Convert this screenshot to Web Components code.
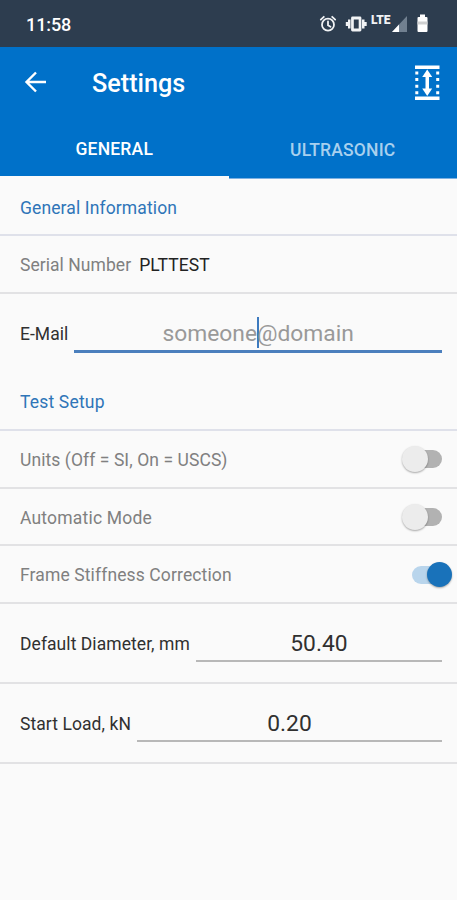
<!DOCTYPE html>
<html lang="en"><head><meta charset="utf-8"><title>Settings</title>
<style>html,body{margin:0;height:100%;background:#fafafa}body{font-family:Roboto,"Liberation Sans",sans-serif;overflow:hidden}</style></head>
<body>
<settings-app></settings-app>
<script>
const define=(name,html,setup)=>customElements.define(name,class extends HTMLElement{
  connectedCallback(){
    if(this.shadowRoot)return;
    const t=document.createElement('template');t.innerHTML=html;
    this.attachShadow({mode:'open'}).append(t.content.cloneNode(true));
    if(setup)setup(this,this.shadowRoot);
  }
});
define('status-bar',`<style>
:host{display:flex;box-sizing:border-box;height:47px;background:#2d3d4f;color:#fff;align-items:center;justify-content:space-between;padding:1px 0 0 26px;font-weight:500;font-size:18px}
span{letter-spacing:-.1px}svg{display:block;width:140px;height:32px}
</style><span>11:58</span>
<svg viewBox="317 8 140 32">
<g fill="none" stroke="#f1f3f5" stroke-width="1.8" stroke-linecap="round"><circle cx="328" cy="24.7" r="6"/><path d="M320.8 19.6l3-2.8M335.2 19.6l-3-2.8M328 21.5v3.7l2.5 1.5"/></g>
<g fill="#f1f3f5"><path fill-rule="evenodd" d="M352.5 16.5h7.5a1.4 1.4 0 0 1 1.4 1.4v12.2a1.4 1.4 0 0 1-1.4 1.4h-7.5a1.4 1.4 0 0 1-1.4-1.4V17.9a1.4 1.4 0 0 1 1.4-1.4zm1.3 3v9h4.9v-9z"/><path d="M348 19.5h2.5v9H348zM362 19.5h2.5v9H362zM345.8 22h2.4v4h-2.4zM364.3 22h2.4v4h-2.4z"/></g>
<text x="371" y="24" font-size="12.5" font-weight="900" fill="#f1f3f5" textLength="19.5" lengthAdjust="spacingAndGlyphs">LTE</text>
<path d="M407 16v16h-15z" fill="#718090"/><path d="M399 24.5V32h-7z" fill="#fff"/>
<path d="M420 14.5h5V17h1.5q1 0 1 1v13q0 1-1 1h-8q-1 0-1-1V18q0-1 1-1h1.5z" fill="#fff"/><path d="M417.5 21.5h10v3h-10z" fill="#cfd0d1"/></svg>`);
define('app-bar',`<style>
:host{display:flex;box-sizing:border-box;height:73px;background:#0071c9;color:#fff;align-items:center;padding:0 17px 0 24px}
h1{margin:1px 0 0 45px;font-size:25.2px;font-weight:500;line-height:30px;flex:1}svg{display:block}.back{margin-bottom:3px}.gauge{margin-bottom:1px}
</style>
<svg class="back" width="23" height="22" viewBox="0 0 23 22" fill="none" stroke="#fff" stroke-width="2.4"><path d="M22 11H3M12 1.5L2.5 11l9.5 9.5"/></svg>
<h1><slot></slot></h1>
<svg class="gauge" width="25" height="36" viewBox="0 0 25 36" fill="#fff"><path d="M0 .5h24.5V4H0zM0 31.5h24.5V35H0z"/><path d="M10.5 10h3.5v16h-3.5z"/><path d="M12.2 4.5L17.2 12h-10z"/><path d="M12.2 31L17.2 23.5h-10z"/><path d="M1.8 6.5v24M22.7 6.5v24" stroke="#fff" stroke-width="3" stroke-dasharray="3 3.6"/></svg>`);
define('tab-item',`<style>
:host{flex:1;box-sizing:border-box;display:flex;height:59px;align-items:center;justify-content:center;color:#a8d0ee;font-size:17.5px;font-weight:500;border-bottom:1px solid #7db1e2}
:host([active]){color:#fff;border-bottom:3px solid #fafafa}
span{padding-top:1px;letter-spacing:.2px}:host([active]) span{padding-top:2px}
</style><span><slot></slot></span>`);
define('tab-strip',`<style>:host{display:flex;background:#0071c9;height:59px}</style><slot></slot>`);
define('setting-row',`<style>
:host{display:flex;box-sizing:border-box;height:var(--h,58px);align-items:center;padding:0 15px 0 20px;border-bottom:2px solid #e2e2e4;color:#808080;font-size:17.5px}
:host([heading]){color:#2f75b8;border-color:#dfe1ea}:host([borderless]){border:0}:host([field]){color:#303030}
.label{white-space:pre;letter-spacing:var(--track,.12px);padding-top:2px}
:host([borderless]) .label{padding-top:1px}
</style><span class="label"></span><slot></slot>`,(h,r)=>r.querySelector('.label').textContent=h.getAttribute('label'));
define('row-value',`<style>:host{color:#222;margin-left:8px;padding-top:2px;letter-spacing:.1px}</style><slot></slot>`);
define('text-field',`<style>
:host{flex:1;margin-left:6px;align-self:flex-end;margin-bottom:20px;box-sizing:border-box;height:37px;border-bottom:2px solid #b8b8b8;display:flex;justify-content:center;align-items:center;font-size:22.8px;color:#303030;padding-top:2px}
:host([focused]){border-bottom:3px solid #4b7fbd;color:#999;height:38px}
i{display:none;width:2px;height:31px;background:#3d7abf;margin:-2px -2px 0 0}:host([focused]) i{display:block}
</style><slot></slot><i></i><slot name="after"></slot>`);
define('toggle-switch',`<style>
:host{display:flex;align-items:center;margin-left:auto;width:40px;height:28px}
.track{width:29px;height:18px;border-radius:9px;background:#b2b2b2;margin-left:11px;display:flex;align-items:center}
.thumb{flex:none;width:26px;height:26px;border-radius:50%;background:#ececec;margin-left:-11px;box-shadow:0 1px 2px #0005}
:host([on]) .track{background:#b9d5ec;width:30px}:host([on]) .thumb{background:#1972ba;margin-left:15px;width:25px;height:25px}
:host([on]){position:relative;left:-1px;padding-top:1px}
</style><div class="track"><div class="thumb"></div></div>`);
define('settings-app',`<style>:host{display:flex;flex-direction:column;width:457px;height:900px;background:#fafafa}setting-row{flex:none}</style>
<status-bar></status-bar><app-bar>Settings</app-bar>
<tab-strip><tab-item active>GENERAL</tab-item><tab-item>ULTRASONIC</tab-item></tab-strip>
<setting-row heading label="General Information" style="--h:57px"></setting-row>
<setting-row label="Serial Number" style="--track:.05px"><row-value>PLTTEST</row-value></setting-row>
<setting-row field borderless label="E-Mail" style="--h:79px;--track:0.04px"><text-field focused>someone<span slot="after">@domain</span></text-field></setting-row>
<setting-row heading label="Test Setup" style="--track:.18px"></setting-row>
<setting-row label="Units (Off = SI, On = USCS)" style="--track:.08px"><toggle-switch></toggle-switch></setting-row>
<setting-row label="Automatic Mode" style="--h:57px;--track:.2px"><toggle-switch></toggle-switch></setting-row>
<setting-row label="Frame Stiffness Correction"><toggle-switch on></toggle-switch></setting-row>
<setting-row field label="Default Diameter, mm" style="--h:80px;--track:.06px"><text-field>50.40</text-field></setting-row>
<setting-row field label="Start Load, kN" style="--h:80px;--track:.07px"><text-field>0.20</text-field></setting-row>`);
</script></body></html>
